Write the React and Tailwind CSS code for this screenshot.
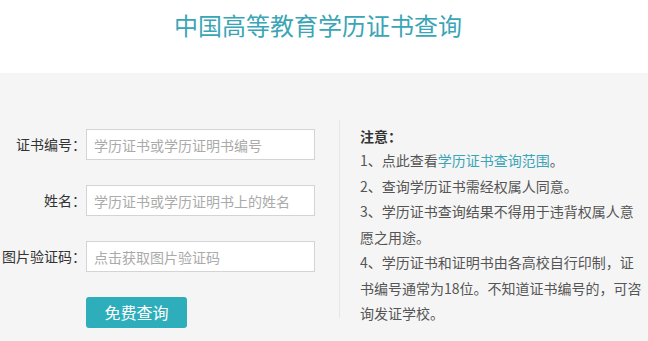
import React from "react";

const fields = [
  { label: "证书编号：", placeholder: "学历证书或学历证明书编号" },
  { label: "姓名：", placeholder: "学历证书或学历证明书上的姓名" },
  { label: "图片验证码：", placeholder: "点击获取图片验证码" },
];

const App = () => {
  return (
    <div
      className="w-[648px] h-[341px] overflow-hidden bg-[#f5f5f5]"
      style={{ fontFamily: '"Microsoft YaHei", "Noto Sans CJK SC", sans-serif' }}
    >
      {/* Header */}
      <div className="h-[73px] bg-white">
        <div className="w-[636px] pt-[9px] text-center">
          <h1 className="text-[24px] leading-[32px] font-normal text-[#3aa5b6]">
            中国高等教育学历证书查询
          </h1>
        </div>
      </div>

      {/* Body */}
      <div className="flex pt-[47px]">
        {/* Form */}
        <div className="w-[339px] pt-[9px] flex flex-col gap-[25px]">
          {fields.map((f) => (
            <div key={f.label} className="flex items-center">
              <label className="w-[86px] text-right text-[14px] text-[#333]">
                {f.label}
              </label>
              <input
                type="text"
                placeholder={f.placeholder}
                className="w-[229px] h-[31px] border border-[#d4d4d4] bg-white pl-[7px] text-[14px] text-[#333] placeholder:text-[#aaa] outline-none"
              />
            </div>
          ))}
          <div className="pl-[86px]">
            <button className="w-[101px] h-[31px] rounded-[3px] bg-[#2eaebb] text-white text-[16px] leading-[31px]">
              免费查询
            </button>
          </div>
        </div>

        {/* Divider */}
        <div className="w-px h-[198px] bg-[#e6e6e6]" />

        {/* Notes */}
        <div className="w-[284px] pl-[20px] pt-[5px] box-content text-[14px] text-[#555]">
          <div className="leading-[23px] font-bold text-[#333]">注意：</div>
          <div className="leading-[25.5px]">
            <p>
              1、点此查看<span className="text-[#3aa5b6]">学历证书查询范围</span>。
            </p>
            <p>2、查询学历证书需经权属人同意。</p>
            <p>3、学历证书查询结果不得用于违背权属人意愿之用途。</p>
            <p>
              4、学历证书和证明书由各高校自行印制，证书编号通常为18位。不知道证书编号的，可咨询发证学校。
            </p>
          </div>
        </div>
      </div>
    </div>
  );
};

export default App;
